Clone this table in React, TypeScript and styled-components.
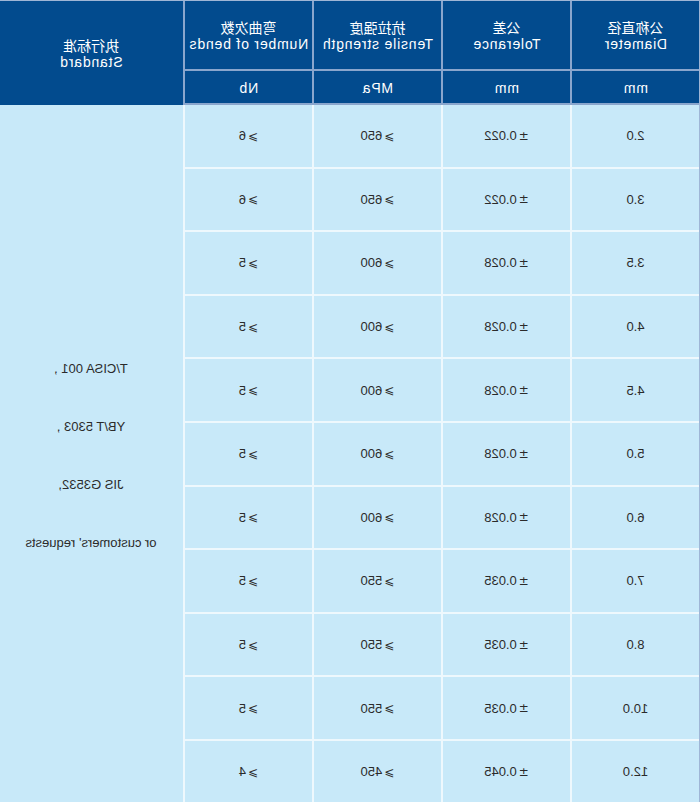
import React from "react";
import styled, { createGlobalStyle } from "styled-components";

const Global = createGlobalStyle`
  html, body { margin: 0; padding: 0; background: #ffffff; }
  body { font-family: "Liberation Sans", Arial, sans-serif; overflow: hidden; }
`;

const Mirror = styled.div`
  width: 700px;
  transform: scaleX(-1);
`;

const Grid = styled.div`
  display: grid;
  grid-template-columns: 129px 129px 129px 129px 184px;
  grid-template-rows: 70px 34px repeat(11, 63.6px);
  border-top: 1px solid #9fb6d6;
  border-left: 1px solid #9fb6d6;
`;

const HeadCell = styled.div<{ $col: number; $row: number; $last?: boolean; $tall?: boolean }>`
  box-sizing: border-box;
  background: #024b8e;
  color: #ffffff;
  display: flex;
  flex-direction: column;
  align-items: center;
  justify-content: center;
  font-size: 14px;
  line-height: 17px;
  letter-spacing: 0.8px;
  text-align: center;
  white-space: nowrap;
  grid-column: ${(p) => p.$col};
  grid-row: ${(p) => (p.$tall ? "1 / span 2" : p.$row)};
  border-right: ${(p) => (p.$last ? "none" : "2px solid #8aa6cd")};
  border-bottom: ${(p) => (p.$tall ? "none" : "2px solid #8aa6cd")};
  padding-top: 2px;
`;

const Cn = styled.span`
  font-family: "Noto Sans CJK SC", sans-serif;
  letter-spacing: 0;
  font-size: 14px;
  line-height: 17px;
`;

const Cell = styled.div<{ $col: number; $row: number }>`
  box-sizing: border-box;
  background: #c8e9f9;
  color: #2b2b2b;
  display: flex;
  align-items: center;
  justify-content: center;
  font-size: 13px;
  grid-column: ${(p) => p.$col};
  grid-row: ${(p) => p.$row};
  border-right: 2px solid #eef8fd;
  border-bottom: 2px solid #eef8fd;
`;

const Sym = styled.span`
  font-family: "DejaVu Sans", sans-serif;
  font-size: 12px;
  margin-right: 2px;
`;

const StdCell = styled.div`
  box-sizing: border-box;
  background: #c8e9f9;
  color: #2b2b2b;
  grid-column: 5;
  grid-row: 3 / span 11;
  display: flex;
  flex-direction: column;
  align-items: center;
  justify-content: center;
  gap: 39px;
  font-size: 13px;
  line-height: 19px;
  padding-top: 2px;
`;

const rows: [string, string, string, string][] = [
  ["2.0", "0.022", "650", "6"],
  ["3.0", "0.022", "650", "6"],
  ["3.5", "0.028", "600", "5"],
  ["4.0", "0.028", "600", "5"],
  ["4.5", "0.028", "600", "5"],
  ["5.0", "0.028", "600", "5"],
  ["6.0", "0.028", "600", "5"],
  ["7.0", "0.035", "550", "5"],
  ["8.0", "0.035", "550", "5"],
  ["10.0", "0.035", "550", "5"],
  ["12.0", "0.045", "450", "4"],
];

export default function App() {
  return (
    <>
      <Global />
      <Mirror>
        <Grid>
          <HeadCell $col={1} $row={1}>
            <Cn>公称直径</Cn>
            <span>Diameter</span>
          </HeadCell>
          <HeadCell $col={2} $row={1}>
            <Cn>公差</Cn>
            <span>Tolerance</span>
          </HeadCell>
          <HeadCell $col={3} $row={1}>
            <Cn>抗拉强度</Cn>
            <span>Tensile strength</span>
          </HeadCell>
          <HeadCell $col={4} $row={1}>
            <Cn>弯曲次数</Cn>
            <span>Number of bends</span>
          </HeadCell>
          <HeadCell $col={5} $row={1} $last $tall>
            <Cn>执行标准</Cn>
            <span>Standard</span>
          </HeadCell>
          <HeadCell $col={1} $row={2}>mm</HeadCell>
          <HeadCell $col={2} $row={2}>mm</HeadCell>
          <HeadCell $col={3} $row={2}>MPa</HeadCell>
          <HeadCell $col={4} $row={2}>Nb</HeadCell>
          {rows.map((r, i) => (
            <React.Fragment key={i}>
              <Cell $col={1} $row={i + 3}>{r[0]}</Cell>
              <Cell $col={2} $row={i + 3}>
                <Sym>±</Sym>
                {r[1]}
              </Cell>
              <Cell $col={3} $row={i + 3}>
                <Sym>⩾</Sym>
                {r[2]}
              </Cell>
              <Cell $col={4} $row={i + 3}>
                <Sym>⩾</Sym>
                {r[3]}
              </Cell>
            </React.Fragment>
          ))}
          <StdCell>
            <span>T/CISA 001 ,</span>
            <span>YB/T 5303 ,</span>
            <span>JIS G3532,</span>
            <span>or customers' requests</span>
          </StdCell>
        </Grid>
      </Mirror>
    </>
  );
}
